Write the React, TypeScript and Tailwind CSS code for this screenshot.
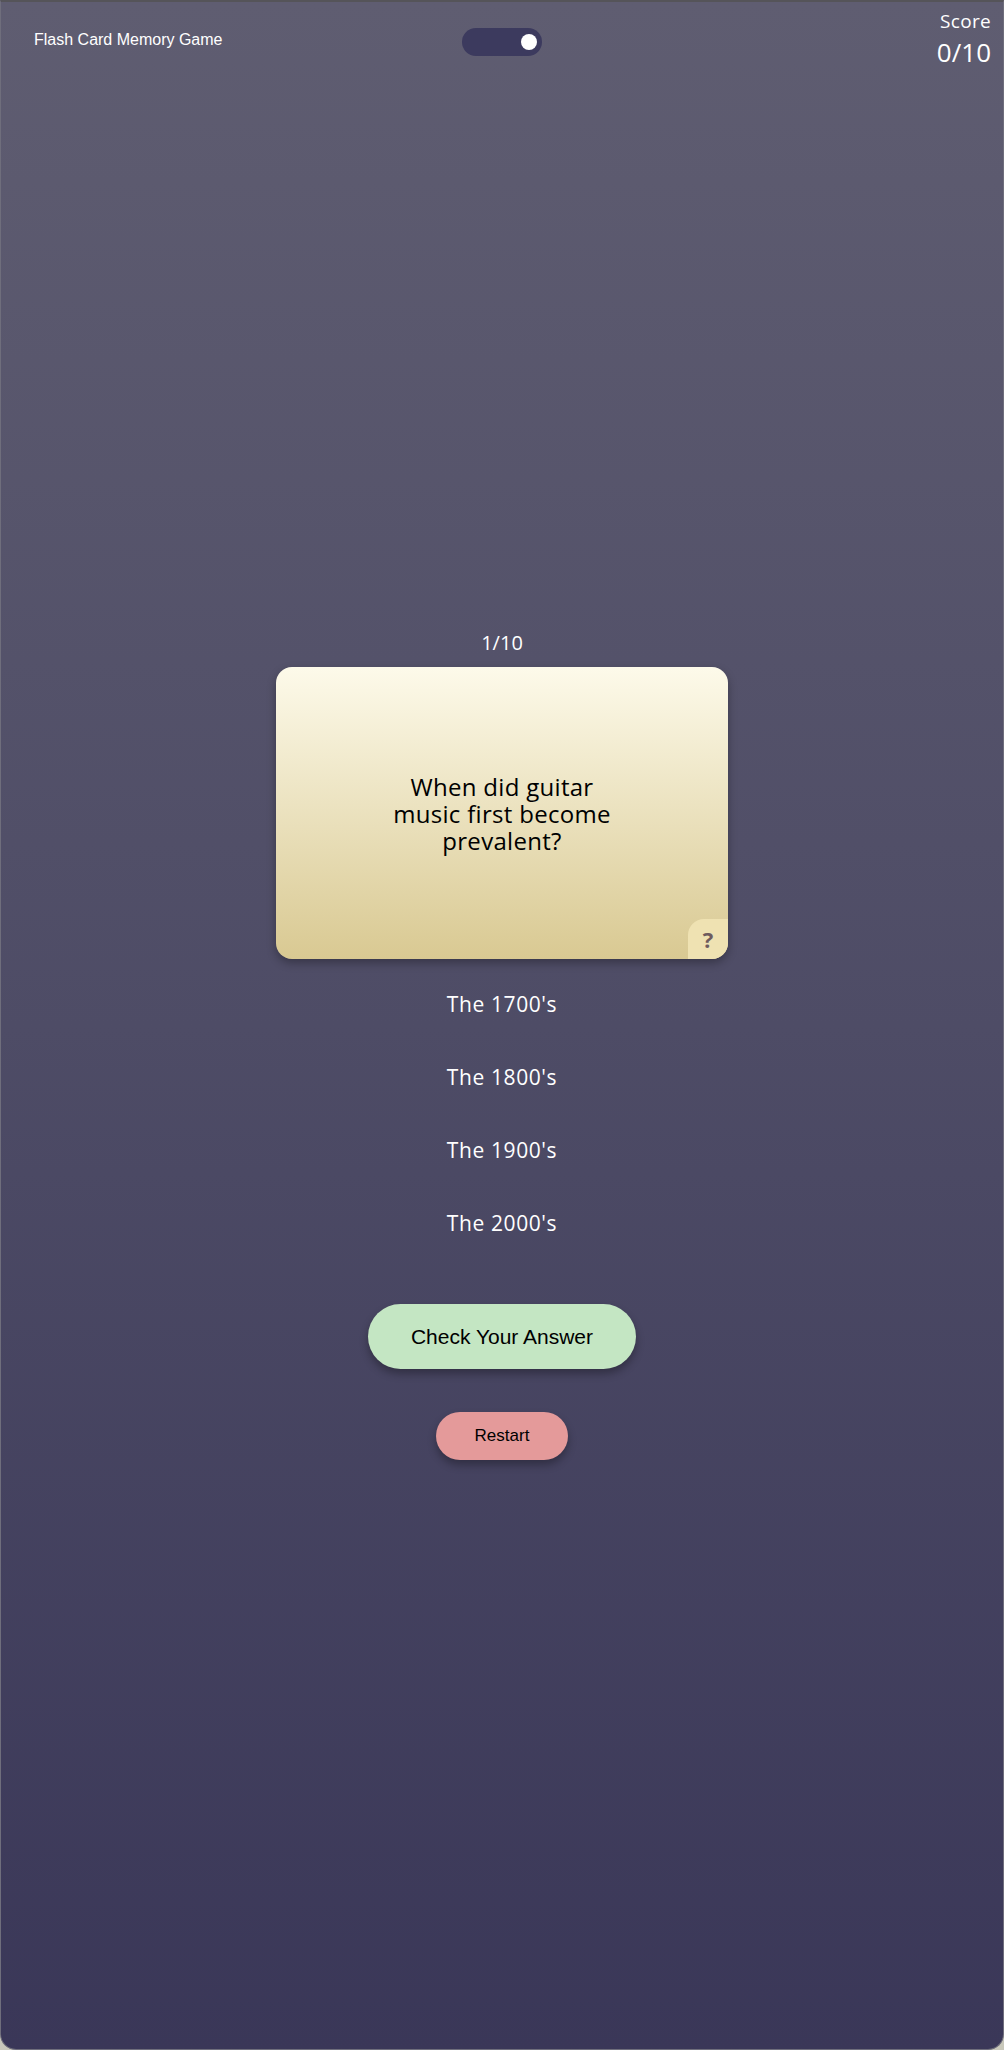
import React, { useState } from 'react';

const answers = ["The 1700's", "The 1800's", "The 1900's", "The 2000's"];

const sans = "font-['Open_Sans','Liberation_Sans',sans-serif]";
const arial = "font-['Liberation_Sans',Arial,sans-serif]";

const App = () => {
  const [dark, setDark] = useState(true);
  const [selected, setSelected] = useState<string | null>(null);

  return (
    <div className="w-full h-[2050px] bg-[#c9c8bb]">
      <div className="h-full w-full rounded-b-[16px] border-t-2 border-x border-b border-t-[#555459] border-x-[#6f6e7c] border-b-[#6f6e7c] bg-gradient-to-b from-[#5f5d71] via-[#4e4c66] to-[#3a3758] text-white">
        <header className="grid grid-cols-[1fr_auto_1fr] items-start px-[12px] pt-[6px]">
          <h1 className={`${arial} ml-[21px] mt-[20px] text-[16px] leading-[24px]`}>Flash Card Memory Game</h1>
          <button
            onClick={() => setDark(!dark)}
            className="mt-[20px] w-[80px] h-[28px] rounded-full bg-[#3c3a5e] flex items-center px-[5px] justify-end"
          >
            <span className="w-[16px] h-[16px] rounded-full bg-white"></span>
          </button>
          <div className={`${sans} text-right justify-self-end`}>
            <div className="text-[19px] leading-[26px] tracking-[0.3px]">Score</div>
            <div className="text-[26px] leading-[32px] mt-[2px]">0/10</div>
          </div>
        </header>

        <main className={`${sans} flex flex-col items-center mt-[561px]`}>
          <div className="text-[20px] leading-[28px] mb-[10px]">1/10</div>

          <div className="relative w-[452px] h-[292px] rounded-[16px] bg-gradient-to-b from-[#fdfaea] to-[#d9c992] shadow-[0_4px_10px_rgba(0,0,0,0.3)] flex items-center justify-center overflow-hidden">
            <p className="w-[240px] text-center text-black text-[24px] leading-[27px] tracking-[0.3px]">
              When did guitar music first become prevalent?
            </p>
            <div className="absolute right-0 bottom-0 w-[40px] h-[40px] bg-[#efe2b2] rounded-tl-[16px] flex items-center justify-center text-[22px] font-bold text-[#6e5b5e]">
              ?
            </div>
          </div>

          <div className="mt-[31px] flex flex-col items-center gap-[45px]">
            {answers.map((a) => (
              <button
                key={a}
                onClick={() => setSelected(a)}
                className={`text-[21px] leading-[28px] tracking-[0.6px] ${selected === a ? 'text-[#c4e6c3]' : 'text-white'}`}
              >
                {a}
              </button>
            ))}
          </div>

          <button className={`${arial} mt-[67px] w-[268px] h-[65px] rounded-full bg-[#c4e6c3] text-black text-[21px] shadow-[0_5px_8px_rgba(0,0,0,0.3)]`}>
            Check Your Answer
          </button>

          <button className={`${arial} mt-[43px] w-[132px] h-[48px] rounded-full bg-[#e49a9a] text-black text-[17px] shadow-[0_5px_8px_rgba(0,0,0,0.3)]`}>
            Restart
          </button>
        </main>
      </div>
    </div>
  );
};

export default App;
